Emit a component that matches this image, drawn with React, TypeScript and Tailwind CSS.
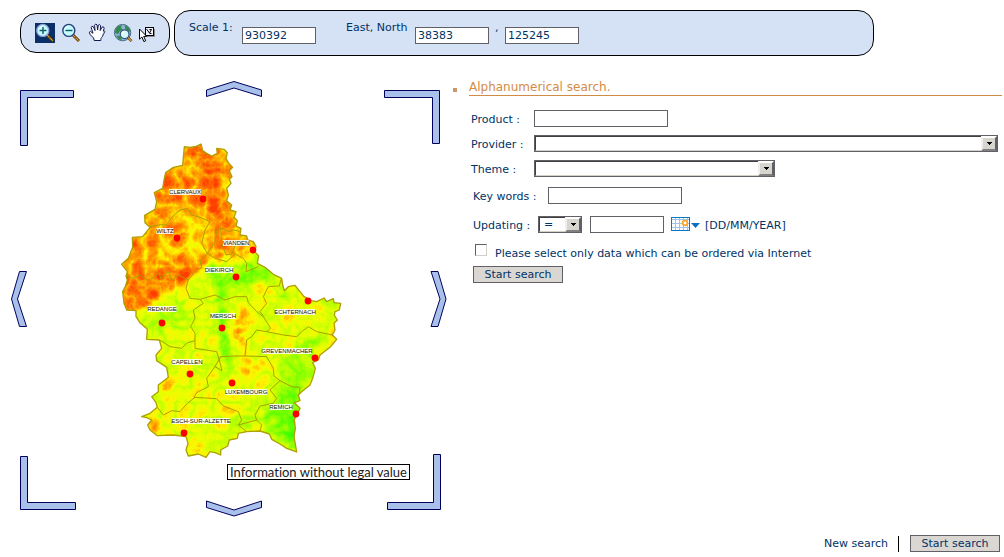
import React from "react";

const INPUT =
  "h-[17px] border border-[#606066] bg-white px-[2px] text-[11px] leading-[15px] text-[#003366] outline-none rounded-none";

/* ---------- toolbar icons (20 x 20) ---------- */

function Magnifier({ plus }: { plus?: boolean }) {
  return (
    <svg width="20" height="20" viewBox="0 0 20 20" aria-hidden="true">
      {plus && <rect width="20" height="20" fill="#0a2f66" />}
      <path d="M12 12L18 18" stroke="#4a3000" strokeWidth="2.8" />
      <path d="M12 12L18 18" stroke="#e6a53a" strokeWidth="1.4" strokeDasharray="1.4 .5" />
      <circle cx="7.8" cy="7.4" r="6" fill="#c4fbff" stroke={plus ? "#8fa4dc" : "#26407e"} strokeWidth="1.4" />
      <path d="M4 6.5a4 4 0 0 1 3-3" stroke="#fff" strokeWidth="1.2" fill="none" />
      <path d="M4.5 7.5h7" stroke="#0b5a66" strokeWidth="1.4" />
      {plus && <path d="M8 4v7" stroke="#0b5a66" strokeWidth="1.4" />}
    </svg>
  );
}

function Hand() {
  return (
    <svg width="20" height="20" viewBox="0 0 20 20" aria-hidden="true">
      <path
        d="M7.2 17.5L6.6 15 3.2 11.6 2.3 9.2 3.5 8.4 6 10.3 4.2 4.5 5 3.2 6.4 3.8 8 7.6 7.6 2.2 8.6 1.1 10 1.8 10.6 7 11.3 2.2 12.6 1.6 13.6 2.8 13.2 7.6 15 4.2 16.4 3.8 17.2 5.2 16.2 8.2 17.2 7.6 17.8 8.6 15.2 13.8 14 15.2 13.8 17.5Z"
        fill="#fff"
        stroke="#10164e"
        strokeWidth="1"
        strokeLinejoin="round"
      />
      <path d="M13.6 16.8L15 14M15.5 12L17 9" stroke="#8f9bbd" strokeWidth=".8" />
    </svg>
  );
}

function Globe() {
  return (
    <svg width="20" height="20" viewBox="0 0 20 20" aria-hidden="true">
      <circle cx="9.6" cy="9.6" r="8.2" fill="#8fb4d8" stroke="#4c6c8c" />
      <path d="M5 3.2L9 2l-1 3 2 2-3 1-2 3-3-1 .6-4zM11.5 2l4 2.4 2 3.6-2 1-3-2.6zM3 12.5l4 .6 2 4-3-.6z" fill="#2f8a4c" />
      <path d="M14.6 14.2L18.6 18.2" stroke="#5a3c00" strokeWidth="2.4" />
      <path d="M14.6 14.2L18.6 18.2" stroke="#e6a53a" strokeWidth="1.2" />
      <circle cx="11.6" cy="11.2" r="4.4" fill="#d2faff" stroke="#37527f" strokeWidth="1.2" />
      <path d="M9 10.4a3 3 0 0 1 2-1.8" stroke="#fff" strokeWidth="1.2" fill="none" />
    </svg>
  );
}

function PickArea() {
  return (
    <svg width="20" height="20" viewBox="0 0 20 20" aria-hidden="true">
      <path d="M8 13.5h7.5V6" stroke="#8a8a8a" fill="none" />
      <rect x="6.5" y="4.5" width="8" height="8" fill="#eef2fa" stroke="#000" />
      <path d="M7.5 6l3 4M10.500 10l2-3.500M12.500 6.500l-2 0M10.500 10.500h2" stroke="#000" fill="none" />
      <path d="M.5 6v10.2l2.4-2.2 2 4.6 1.8-.8-2-4.4h3.1z" fill="#fff" stroke="#000" />
    </svg>
  );
}

/* ---------- pan controls ---------- */

function PanButton({
  label,
  w,
  h,
  points,
  className,
}: {
  label: string;
  w: number;
  h: number;
  points: string;
  className: string;
}) {
  return (
    <button type="button" aria-label={label} className={"col-start-1 row-start-1 " + className}>
      <svg width={w} height={h} viewBox={`0 0 ${w} ${h}`} className="block">
        <polygon points={points} fill="#a9c0ea" stroke="#00005c" strokeWidth="1" />
      </svg>
    </button>
  );
}

/* ---------- relief map ---------- */

const OUTLINE =
  "253,50 270,52 288,49 303,42 308,62 320,70 335,78 352,70 350,55 372,58 382,68 378,85 385,98 398,112 388,122 396,140 388,148 393,160 380,175 385,195 380,212 395,225 390,240 408,245 402,262 412,272 408,288 423,295 420,315 440,318 443,330 460,335 468,350 464,365 476,378 472,400 495,412 520,433 545,445 548,465 553,482 565,470 585,466 600,485 612,500 635,512 650,515 672,504 680,515 700,506 702,518 722,520 718,540 705,545 703,556 712,570 702,580 705,600 697,615 710,628 692,650 660,675 655,690 638,698 646,715 638,745 630,765 605,785 595,795 600,812 583,818 600,835 590,855 583,868 586,895 582,920 590,966 560,955 540,942 515,928 508,912 480,903 440,905 415,910 412,925 388,930 383,948 362,960 362,975 345,968 330,965 318,982 295,972 265,978 258,960 264,940 258,920 220,915 172,917 150,900 143,885 155,870 140,863 125,860 150,850 172,832 168,818 155,800 175,785 175,765 205,742 200,712 170,692 168,675 185,655 178,630 140,628 142,598 120,578 108,560 108,542 80,540 72,520 68,485 76,470 82,450 78,438 82,425 65,403 85,385 98,352 97,322 128,320 150,292 135,278 134,256 165,238 170,215 163,188 188,175 192,150 197,128 220,112 248,106";

const BORDERS = [
  "150,290 180,284 200,285 215,262 240,240 262,236 275,255 300,262 330,275 315,300 305,340 322,370 300,392 305,412 285,425 265,450",
  "80,438 100,445 120,435 145,452 178,430 182,445 205,425 215,450 235,435 265,450",
  "322,370 345,335 350,302 362,294 385,305 400,300 420,304",
  "362,294 365,340 378,375 395,372 405,348",
  "322,370 345,385 380,395 405,372 430,385 440,400 438,425 475,410",
  "265,450 258,475 270,505 300,508 310,520 280,540 285,565 272,590 285,610 285,655 350,665 358,690 366,722",
  "300,508 345,495 375,510 405,500 440,500 445,518 470,545 490,560 512,595 500,605 470,600 455,620 440,630 435,678",
  "543,448 538,468 505,470 490,500 500,520 480,545 492,560",
  "500,605 550,615 590,620 605,605 625,590 650,605 697,615",
  "180,630 210,650 245,655 262,638 285,632",
  "366,722 345,710 320,745 325,770 290,788 282,802 350,806 370,828 415,845 425,870 415,885 440,905",
  "345,710 362,680 400,678 435,678 500,680 520,715 522,738 540,752 510,780 530,805 520,820 480,828 465,855 470,870 415,885",
  "172,832 190,855 215,842 240,845 262,820 285,802",
  "540,752 575,770 600,772 598,792",
  "470,870 485,885 480,903",
];

const TOWNS: [string, number, number, number, number, number][] = [
  ["CLERVAUX", 185, 194, 32, 203, 199],
  ["WILTZ", 165, 233, 17, 177, 238],
  ["VIANDEN", 236, 245, 26, 253, 250],
  ["DIEKIRCH", 219, 272, 28, 236, 277],
  ["REDANGE", 162, 311, 29, 162, 323],
  ["MERSCH", 223, 318, 25, 222, 328],
  ["ECHTERNACH", 295, 314, 40, 308, 301],
  ["GREVENMACHER", 287, 353, 49, 315, 358],
  ["CAPELLEN", 187, 364, 30, 190, 374],
  ["LUXEMBOURG", 246, 394, 42, 232, 383],
  ["REMICH", 281, 409, 23, 296, 414],
  ["ESCH-SUR-ALZETTE", 201, 423, 58, 184, 433],
];

function ReliefMap() {
  return (
    <svg
      viewBox="11 81 436 436"
      className="col-start-1 row-start-1 block w-full"
      role="img"
      aria-label="Relief map of Luxembourg"
    >
      <defs>
        <clipPath id="country">
          <polygon points={OUTLINE} />
        </clipPath>
        <filter id="soft" x="-20%" y="-20%" width="140%" height="140%">
          <feGaussianBlur stdDeviation="10" />
        </filter>
        <filter
          id="relief"
          filterUnits="userSpaceOnUse"
          x="50"
          y="30"
          width="690"
          height="970"
          colorInterpolationFilters="sRGB"
        >
          <feTurbulence type="turbulence" baseFrequency="0.022" numOctaves="5" seed="4" result="n" />
          <feColorMatrix in="n" type="matrix" values="1 0 0 0 0  1 0 0 0 0  1 0 0 0 0  0 0 0 0 1" result="g" />
          <feComposite in="SourceGraphic" in2="g" operator="arithmetic" k1="0.7" k2="0.84" k3="0.22" k4="-0.06" />
          <feComponentTransfer>
            <feFuncR type="table" tableValues="0.1 0.35 0.6 0.78 0.92 1 1 1 1 1 1" />
            <feFuncG type="table" tableValues="1 1 1 1 1 0.95 0.78 0.62 0.48 0.36 0.24" />
            <feFuncB type="table" tableValues="0 0 0 0 0 0 0 0 0 0 0" />
          </feComponentTransfer>
        </filter>
      </defs>
      <g transform="translate(100 130) scale(0.33333)">
        <g clipPath="url(#country)">
          <g filter="url(#relief)">
            <rect x="50" y="30" width="690" height="970" fill="#5a5a5a" />
            <g filter="url(#soft)">
              <path d="M60 30H440V300L420 360 330 400 250 460 130 540 60 560Z" fill="#a2a2a2" />
              <path d="M260 40H350L370 200 390 300 350 330 325 230 300 120Z" fill="#c6c6c6" />
              <path d="M70 440L200 430 310 390 300 420 220 470 110 540 70 540Z" fill="#c6c6c6" />
              <path d="M370 310L460 330 440 380 380 370Z" fill="#a4a4a4" />
              <path d="M240 230L300 250 320 350 310 390 120 390 130 360 270 340Z" fill="#7e7e7e" />
              <path d="M375 90L400 200 410 300 385 250 370 170Z" fill="#787878" />
              <path d="M120 330L230 300 240 330 130 360Z" fill="#989898" />
              <path d="M340 360L360 440 480 380 540 440 460 460 380 480 380 560 400 750 375 750 350 560 340 460 320 400Z" fill="#262626" />
              <path d="M550 470L570 480 560 530 540 530ZM600 490L720 520 690 550 640 530Z" fill="#282828" />
              <path d="M700 570L640 690 640 740 560 800 530 720 600 640Z" fill="#353535" />
              <path d="M600 750L590 960 540 930 480 890 510 800Z" fill="#282828" />
              <path d="M580 800L600 830 590 960 560 930Z" fill="#080808" />
              <path d="M400 560L440 530 470 560 430 620 420 660 400 620Z" fill="#8a8a8a" />
              <path d="M410 700L450 680 480 740 440 760Z" fill="#868686" />
              <path d="M480 470L500 480 490 540 470 520Z" fill="#848484" />
              <path d="M140 870H180L190 910H150ZM170 760L230 750 220 790 180 800ZM260 920L330 930 300 980H260Z" fill="#7e7e7e" />
              <path d="M540 520L690 520 690 590 540 590Z" fill="#666666" />
              <path d="M120 560L260 500 270 620 150 620ZM400 850L480 840 470 900H400Z" fill="#444444" />
            </g>
          </g>
        </g>
        <g fill="none" stroke="#aea000" strokeWidth="3" strokeLinejoin="round">
          {BORDERS.map((points) => (
            <polyline key={points} points={points} />
          ))}
          <polygon points={OUTLINE} strokeWidth="4" />
        </g>
      </g>
      {TOWNS.map(([name, x, y, w, cx, cy]) => (
        <g key={name}>
          <rect x={x - w / 2} y={y - 5} width={w} height="6" fill="#fff" fillOpacity="0.85" />
          <text
            x={x}
            y={y}
            textAnchor="middle"
            className="fill-[#111111] font-['Liberation_Sans',sans-serif] text-[6px]"
          >
            {name}
          </text>
          <circle cx={cx} cy={cy} r="3.4" fill="#ff0000" />
        </g>
      ))}
    </svg>
  );
}

/* ---------- form controls ---------- */

function Dropdown({ id, className, options }: { id: string; className: string; options: string[] }) {
  return (
    <span className={"relative block h-[17px] border border-[#606066] " + className}>
      <select
        id={id}
        className="block h-[15px] w-full appearance-none border-y border-l border-t-[#404040] border-b-[#d4d0c8] border-l-[#404040] bg-white pl-1 text-[11px] leading-[13px] text-[#003366] outline-none"
      >
        {options.map((o) => (
          <option key={o}>{o}</option>
        ))}
      </select>
      <span className="pointer-events-none absolute inset-y-0 right-0 flex w-4 items-center justify-center border-2 border-t-white border-r-[#606066] border-b-[#808080] border-l-[#f0efeb] bg-[#d8d5ce]">
        <svg width="5" height="3" viewBox="0 0 5 3" shapeRendering="crispEdges">
          <path d="M0 0h5v1H4v1H3v1H2V2H1V1H0z" fill="#000" />
        </svg>
      </span>
    </span>
  );
}

function SearchButton() {
  return (
    <button
      type="button"
      className="h-[17px] w-[90px] border border-[#606066] bg-[#dad7d2] text-center text-[11px] leading-[15px] text-[#003366]"
    >
      Start search
    </button>
  );
}

function CalendarIcon() {
  return (
    <svg width="29" height="14" viewBox="0 0 29 14" aria-hidden="true">
      <rect x=".5" y=".5" width="18" height="13" fill="#fff" stroke="#0a78c8" />
      <path d="M1 2.5h17M1 6.5h17M1 10.5h17M4.5 1v12M8.5 1v12M12.5 1v12M16.5 1v12" stroke="#9cc4ea" />
      <circle cx="14" cy="6" r="2.3" fill="#fff" stroke="#ffa526" strokeWidth="1.8" />
      <path d="M20 6h9l-4.5 5z" fill="#0a6fc2" />
    </svg>
  );
}

const TOOLS: [string, React.ReactNode][] = [
  ["Zoom in", <Magnifier plus />],
  ["Zoom out", <Magnifier />],
  ["Pan", <Hand />],
  ["Full extent", <Globe />],
  ["Select", <PickArea />],
];

export default function App() {
  return (
    <div className="bg-white font-['DejaVu_Sans',Verdana,sans-serif] text-[11px] leading-[15px] text-[#003366]">
      <header className="flex items-start gap-1 pt-[10px] pl-5">
        <div
          role="toolbar"
          aria-label="Map tools"
          className="mt-[3px] flex h-10 w-[150px] shrink-0 gap-[6px] rounded-2xl border border-black bg-[#d5e1f4] pt-[9px] pl-[14px]"
        >
          {TOOLS.map(([name, icon]) => (
            <button key={name} type="button" aria-label={name} className="h-5 w-5">
              {icon}
            </button>
          ))}
        </div>
        <div className="flex h-[46px] max-w-[700px] flex-1 items-start rounded-2xl border border-black bg-[#d5e1f4] pt-[9px] pl-[14px]">
          <label htmlFor="scale" className="w-[53px]">Scale 1:</label>
          <input id="scale" defaultValue="930392" className={INPUT + " mt-[7px] w-[74px]"} />
          <label htmlFor="east" className="ml-[30px] w-[69px]">East, North</label>
          <input id="east" defaultValue="38383" className={INPUT + " mt-[7px] w-[74px]"} />
          <span className="w-4 pl-[6px]">,</span>
          <input aria-label="North" defaultValue="125245" className={INPUT + " mt-[7px] w-[74px]"} />
        </div>
      </header>

      <main className="mt-[25px] flex gap-[6px] pr-[2px] pl-[11px]">
        <section aria-label="Map" className="grid w-[436px] shrink-0 self-start">
          <ReliefMap />
          <PanButton label="Pan north-west" w={54} h={56} points=".5,.5 53.5,.5 53.5,7.5 7.5,7.5 7.5,55.5 .5,55.5" className="mt-[9px] ml-[9px] self-start justify-self-start" />
          <PanButton label="Pan north" w={56} h={17} points=".5,9 28,.5 55.5,9 55.5,15.5 28,7 .5,15.5" className="ml-[10px] self-start justify-self-center" />
          <PanButton label="Pan north-east" w={56} h={54} points=".5,.5 55.5,.5 55.5,53.5 48.5,53.5 48.5,7.5 .5,7.5" className="mt-[9px] mr-[7px] self-start justify-self-end" />
          <PanButton label="Pan west" w={17} h={56} points="8.5,.5 15.5,.5 6.5,28 15.5,55.5 8.5,55.5 .5,28" className="self-center justify-self-start" />
          <PanButton label="Pan east" w={17} h={56} points="8,.5 1,.5 10,28 1,55.5 8,55.5 16,28" className="self-center justify-self-end" />
          <PanButton label="Pan south-west" w={56} h={54} points=".5,.5 7.5,.5 7.5,46.5 55.5,46.5 55.5,53.5 .5,53.5" className="mb-[7px] ml-[9px] self-end justify-self-start" />
          <PanButton label="Pan south" w={56} h={17} points=".5,1 28,10 55.5,1 55.5,7.5 28,16 .5,7.5" className="ml-[10px] self-end justify-self-center" />
          <PanButton label="Pan south-east" w={54} h={56} points="46.5,.5 53.5,.5 53.5,55.5 .5,55.5 .5,48.5 46.5,48.5" className="mr-[6px] mb-[7px] self-end justify-self-end" />
          <p className="col-start-1 row-start-1 mr-[37px] mb-[37px] h-4 self-end justify-self-end border border-black bg-white px-[2px] font-['Lato',sans-serif] text-[13px] leading-[14px] text-[#222222] [font-variant-ligatures:none]">
            Information without legal value
          </p>
        </section>

        <section aria-labelledby="title" className="flex min-w-0 flex-1 flex-col">
          <div className="flex">
            <span className="mt-[7px] h-1 w-1 shrink-0 bg-[#c6986a]" />
            <h1 id="title" className="ml-3 h-[15px] flex-1 border-b border-[#cf8c48] text-[12px] leading-[12px] text-[#d38b45]">
              Alphanumerical search.
            </h1>
          </div>
          <form className="flex flex-col items-start pt-[14px] pl-[18px]">
            <div className="flex h-[25px] items-start">
              <label htmlFor="product" className="w-[63px] pt-[2px]">Product :</label>
              <input id="product" className={INPUT + " w-[134px]"} />
            </div>
            <div className="flex h-[25px] items-start self-stretch pr-1">
              <label htmlFor="provider" className="w-[63px] shrink-0 pt-[2px]">Provider :</label>
              <Dropdown id="provider" className="flex-1" options={[""]} />
            </div>
            <div className="flex h-[27px] items-start">
              <label htmlFor="theme" className="w-[63px] pt-[2px]">Theme :</label>
              <Dropdown id="theme" className="w-[241px]" options={[""]} />
            </div>
            <div className="flex h-[29px] items-start pl-[2px]">
              <label htmlFor="keywords" className="w-[75px] pt-[2px]">Key words :</label>
              <input id="keywords" className={INPUT + " w-[134px]"} />
            </div>
            <div className="flex h-[28px] items-start pl-[2px]">
              <label htmlFor="operator" className="w-[65px] pt-[2px]">Updating :</label>
              <Dropdown id="operator" className="w-[44px]" options={["=", "<", ">"]} />
              <input aria-label="Updating date" className={INPUT + " ml-2 w-[74px]"} />
              <button type="button" aria-label="Open calendar" className="mt-px ml-[7px]">
                <CalendarIcon />
              </button>
              <span className="ml-[5px] pt-[2px]">[DD/MM/YEAR]</span>
            </div>
            <div className="flex h-[22px] items-start pl-[2px]">
              <input
                id="internet"
                type="checkbox"
                className="ml-[2px] h-3 w-3 appearance-none border border-t-[#606060] border-r-[#d4d0c8] border-b-[#d4d0c8] border-l-[#606060] bg-white checked:bg-[#003366]"
              />
              <label htmlFor="internet" className="ml-2 pt-[2px]">
                Please select only data which can be ordered via Internet
              </label>
            </div>
            <div className="pl-[2px]">
              <SearchButton />
            </div>
          </form>
        </section>
      </main>

      <footer className="mt-[18px] flex h-[17px] items-center justify-end pr-1">
        <a href="#new">New search</a>
        <span className="ml-[10px] h-4 w-px bg-black" />
        <span className="ml-[11px] flex">
          <SearchButton />
        </span>
      </footer>
    </div>
  );
}
